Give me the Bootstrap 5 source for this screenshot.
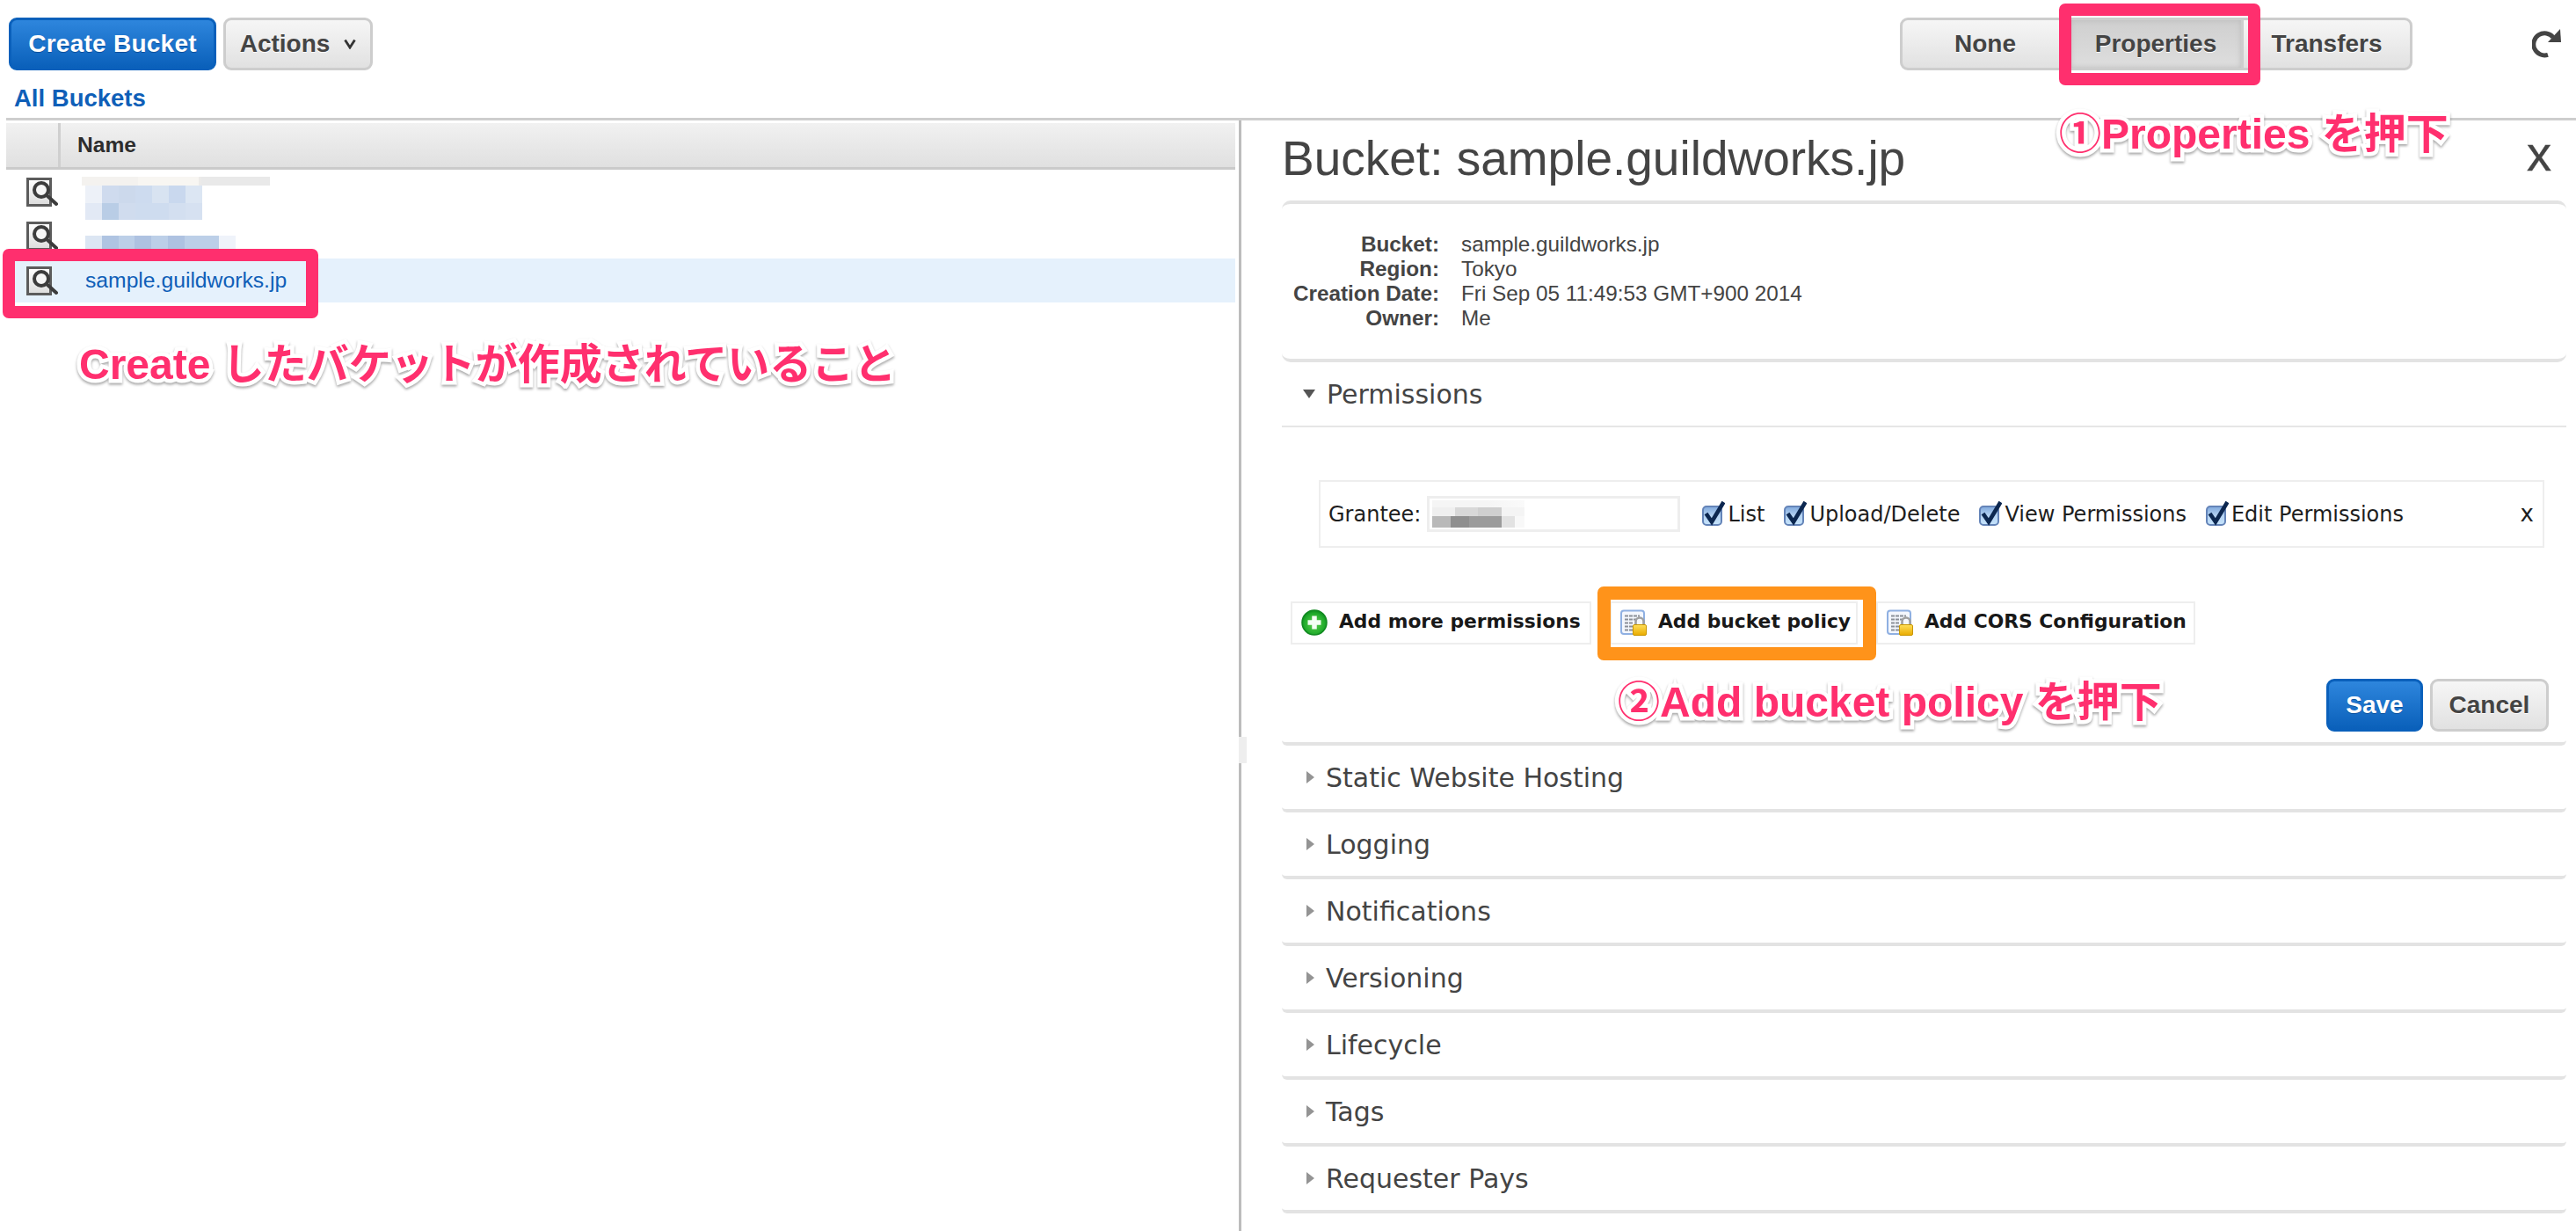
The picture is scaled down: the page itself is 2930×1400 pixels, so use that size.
<!DOCTYPE html>
<html lang="en">
<head>
<meta charset="utf-8">
<title>S3 Buckets</title>
<link rel="stylesheet" href="https://cdn.jsdelivr.net/npm/bootstrap@5.3.0/dist/css/bootstrap.min.css">
<style>
html,body{height:100%;}
body{font-family:"Liberation Sans",Arial,sans-serif;color:#444;background:#fff;overflow:hidden;position:relative;width:2930px;height:1400px;}
.s3-btn{font-family:"Liberation Sans",Arial,sans-serif;font-weight:700;font-size:28px;line-height:1;height:60px;border-width:3px;border-style:solid;border-radius:9px;padding:0;display:inline-flex;align-items:center;justify-content:center;}
.s3-grey,.s3-grey:hover{background:linear-gradient(#f6f6f6,#e1e1e1);border-color:#cdcdcd;color:#444;text-shadow:0 1px 0 #fff;}
.s3-blue,.s3-blue:hover{background:linear-gradient(#2e86dd,#0a60ba);border-color:#0a60bb;color:#fff;text-shadow:0 1px 0 #0a4f9c;}
.s3-create{width:236px;letter-spacing:.25px;}
.s3-actions{width:170px;gap:16px;}
.s3-group .s3-btn{border-radius:0;margin-left:-3px!important;flex:none;}
.s3-none{width:194px;border-radius:9px 0 0 9px!important;margin-left:0!important;}
.s3-props{width:200px;background:linear-gradient(#cfcfcf,#dedede)!important;box-shadow:inset 0 0 6px #bbb;}
.s3-trans{width:195px;border-radius:0 9px 9px 0!important;}
.s3-groupwrap{margin-right:136px;}
.s3-top{height:137px;margin-left:7px;border-bottom:3px solid #cecece;}
.s3-bar{padding:20px 0 0 3px;}
.s3-refresh{width:33px;height:33px;margin:13px 17px 0 0;}
.s3-crumb{font-size:27.5px;font-weight:700;color:#0f5fb8;text-decoration:none;line-height:30px;margin:17px 0 0 9px;display:block;}
.s3-main{height:1263px;}
.s3-left{width:1398px;margin-left:7px;padding-top:3px;}
.s3-head{height:53px;background:linear-gradient(#f1f1f1,#e0e0e0);border-bottom:3px solid #cacaca;color:#2d2d2d;font-weight:700;font-size:24.6px;}
.s3-head-a{width:62px;border-right:3px solid #cfcfcf;}
.s3-head-b{padding-left:19px;line-height:50px;}
.s3-row{height:50.4px;}
.s3-row-on{background:#e5f1fc;}
.s3-ico{width:36px;height:34px;margin:9px 0 0 23px;flex:none;}
.s3-name{margin-left:31px;font-size:24.7px;color:#0f5fb8;text-decoration:none;line-height:50px;}
.s3-cell{margin-left:27px;}
.s3-beige{width:214px;height:10px;margin:8px 0 0 0;background:linear-gradient(90deg,#f4f2ef 30%,#f8f6f2 30% 62%,#eeece9 62%,#e9e9e9 64%);}
.s3-p1,.s3-p2{width:133px;height:19.5px;margin-left:4px;}
.s3-p1{background:linear-gradient(90deg,#edf1f8 14.3%,#cfdbee 14.3% 28.6%,#ccd9ec 28.6% 42.9%,#cddbef 42.9% 57.2%,#d8e3f1 57.2% 71.5%,#c9d8ee 71.5% 85.8%,#dce6f3 85.8%);}
.s3-p2{background:linear-gradient(90deg,#e2e9f5 14.3%,#b9cde6 14.3% 28.6%,#d0dcee 28.6% 42.9%,#cedcef 42.9% 71.5%,#d3dff0 71.5% 85.8%,#d6e1f1 85.8%);}
.s3-p3{width:171px;height:17px;margin:25px 0 0 4px;background:linear-gradient(90deg,#dce6f3 11%,#afc4e2 11% 22%,#bccfe8 22% 33%,#aec2e1 33% 44%,#bccfe8 44% 55%,#aec2e1 55% 66%,#bccfe8 66% 89%,#eff3fa 89%);}
.s3-split{width:3px;margin-left:4px;background:#bcbcbc;position:relative;}
.s3-grip{position:absolute;left:0;top:701px;width:9px;height:30px;background:#eee;}
.s3-right{width:1461px;margin-left:46px;}
.s3-title{font-size:55px;line-height:62px;font-weight:400;color:#444;height:91px;padding:12px 0 0 0;margin:0;}
.s3-close{position:absolute;left:2874px;top:145px;font-size:56px;line-height:60px;color:#444;text-decoration:none;-webkit-text-stroke:.4px #444;}
.s3-info{height:184px;border-top:4px solid #e3e3e3;border-bottom:4px solid #e3e3e3;border-radius:10px;padding-top:32px;font-size:24.3px;line-height:28px;}
.s3-k{width:179px;text-align:right;font-weight:700;flex:none;}
.s3-v{margin-left:25px;}
.s3-sec{font-family:"DejaVu Sans",Verdana,sans-serif;font-size:30px;color:#444;height:76px;border-bottom:4px solid #e3e3e3;border-radius:0 0 6px 6px;padding-left:28px;gap:13px;}
.s3-sec svg{width:9px;height:14px;flex:none;}
.s3-perm{height:74px;border-bottom:2px solid #e6e6e6;padding-left:24px;gap:13px;font-family:"DejaVu Sans",Verdana,sans-serif;font-size:30px;color:#444;}
.s3-perm svg{width:14px;height:10px;flex:none;}
.s3-body{height:362px;border-bottom:4px solid #e3e3e3;border-radius:0 0 6px 6px;padding-top:60px;font-family:"DejaVu Sans",Verdana,sans-serif;color:#1e1e1e;}
.s3-grant{margin-left:42px;width:1394px;height:77px;border:2px solid #eee;font-size:24px;padding-left:9px;}
.s3-input{width:288px;height:41px;border:3px solid #eee;margin-left:7px;margin-right:25px;padding:2px 0 0 3px;flex:none;}
.s3-b1,.s3-b2,.s3-b3{width:105px;}
.s3-b1{height:8px;background:linear-gradient(90deg,#f5f5f5 60%,#fafafa);}
.s3-b2{height:10px;background:linear-gradient(90deg,#efefef 25%,#d8d8d8 25% 50%,#cfcfcf 50% 75%,#f4f4f4 75%);}
.s3-b3{height:13px;background:linear-gradient(90deg,#b9b9b9 20%,#8f8f8f 20% 40%,#9b9b9b 40% 75%,#e2e2e2 75% 90%,#f8f8f8 90%);}
.s3-chk{width:26px;height:30px;flex:none;margin:0 3px 4px 0;}
.s3-lab{margin-right:22px;}
.s3-x{margin-left:auto;margin-right:10px;font-size:26px;}
.s3-adds{margin:61px 0 0 10px;height:49px;font-size:21.800px;font-weight:700;color:#181818;}
.s3-add{height:49px;border:2px solid #eee;padding:0 0 2px 10px;gap:13px;white-space:nowrap;}
.s3-add svg{width:30px;height:30px;flex:none;}
.s3-a1{width:342px;}.s3-a2{width:282px;margin-left:21px;}.s3-a3{width:363px;margin-left:21px;}
.s3-actions2{margin:39px 0 0 0;padding-right:20px;gap:8px;}
.s3-save{width:110px;}.s3-cancel{width:135px;}
.s3-box{position:absolute;box-sizing:border-box;border:14px solid #ff2f6e;border-radius:7px;pointer-events:none;}
.s3-box1{left:2342px;top:4px;width:229px;height:93px;}
.s3-box2{left:3px;top:283px;width:359px;height:79px;}
.s3-box3{left:1817px;top:667px;width:317px;height:84px;border-color:#ff931a;border-width:15px;}
.s3-note{position:absolute;white-space:nowrap;font-family:"Liberation Sans","Noto Sans CJK JP",sans-serif;font-weight:700;font-size:48px;line-height:56px;color:#ff2f6e;-webkit-text-stroke:9px #fff;paint-order:stroke fill;filter:drop-shadow(0 2px 1.5px rgba(0,0,0,.35));}
.s3-n1{left:2342px;top:125px;}
.s3-n2{left:90px;top:387px;}
.s3-n3{left:1840px;top:771px;}
</style>
</head>
<body>
<svg width="0" height="0" class="position-absolute">
<defs>
<linearGradient id="gPaper" x1="0" y1="0" x2="0" y2="1"><stop offset="0" stop-color="#fff"/><stop offset="1" stop-color="#dcdcdc"/></linearGradient>
<radialGradient id="gGreen" cx=".5" cy=".55" r=".55"><stop offset="0" stop-color="#5fd24f"/><stop offset=".75" stop-color="#22ac2c"/><stop offset="1" stop-color="#0c8c1c"/></radialGradient>
<linearGradient id="gGold" x1="0" y1="0" x2="0" y2="1"><stop offset="0" stop-color="#ffdf5a"/><stop offset="1" stop-color="#e9ab00"/></linearGradient>
<linearGradient id="gAqua" x1="0" y1="0" x2="0" y2="1"><stop offset="0" stop-color="#7fa8dc"/><stop offset=".5" stop-color="#b4d2f2"/><stop offset="1" stop-color="#c6e4fc"/></linearGradient>
<symbol id="icoLens" viewBox="0 0 36 34">
<rect x="1.500" y="1.500" width="26" height="30" fill="url(#gPaper)" stroke="#5c5c5c" stroke-width="3"/>
<circle cx="17" cy="14" r="8" fill="#f6f6f6" stroke="#3c3c3c" stroke-width="4"/>
<path d="M23 20L34 30" stroke="#3c3c3c" stroke-width="4" stroke-linecap="round"/>
</symbol>
<symbol id="icoPolicy" viewBox="0 0 30 30">
<rect x="1" y="1.500" width="26" height="26.500" rx="3" fill="#f4f7fd" stroke="#8fb0e2" stroke-width="2"/>
<path d="M5 7.500h17M5 11.500h14M5 15.500h9M5 19.500h9M5 23.500h9" stroke="#8a8f98" stroke-width="1.800" stroke-dasharray="4 1"/>
<path d="M17.500 19v-5a4.500 4.500 0 0 1 9 0v5" fill="none" stroke="#a0a0a0" stroke-width="2.600"/>
<rect x="14.500" y="17.500" width="15" height="12" rx="1.500" fill="url(#gGold)" stroke="#c99600"/>
</symbol>
<symbol id="icoPlus" viewBox="0 0 30 30">
<circle cx="15" cy="15" r="14" fill="url(#gGreen)" stroke="#118a20" stroke-width="1.500"/>
<path d="M15 7.500v15M7.500 15h15" stroke="#f4fff4" stroke-width="5.500"/>
</symbol>
<symbol id="icoChk" viewBox="0 0 26 30">
<rect x="1" y="8" width="21" height="21" rx="4" fill="url(#gAqua)" stroke="#6484b8" stroke-width="2"/>
<path d="M4.500 16L11 25.500L24.500 3" fill="none" stroke="#0c2750" stroke-width="4.600"/>
</symbol>
<symbol id="triR" viewBox="0 0 9 14"><path d="M0 0L9 7L0 14Z" fill="#949494"/></symbol>
<symbol id="triD" viewBox="0 0 14 10"><path d="M0 0H14L7 10Z" fill="#555"/></symbol>
</defs>
</svg>

<header class="s3-top">
  <div class="s3-bar d-flex justify-content-between align-items-start">
    <div class="d-flex gap-2">
      <button type="button" class="btn s3-btn s3-blue s3-create">Create Bucket</button>
      <button type="button" class="btn s3-btn s3-grey s3-actions">Actions
        <svg width="14" height="12" viewBox="0 0 14 12"><path d="M1.500 1.500L7 10L12.500 1.500" fill="none" stroke="#333" stroke-width="2.800"/></svg>
      </button>
    </div>
    <div class="d-flex">
      <div class="btn-group s3-group s3-groupwrap" role="group">
        <button type="button" class="btn s3-btn s3-grey s3-none">None</button>
        <button type="button" class="btn s3-btn s3-grey s3-props">Properties</button>
        <button type="button" class="btn s3-btn s3-grey s3-trans">Transfers</button>
      </div>
      <svg class="s3-refresh" viewBox="0 0 33 33"><path d="M24 9.500A12.500 12.500 0 1 0 18 29.300" fill="none" stroke="#444" stroke-width="5"/><path d="M18 15H33L32 0Z" fill="#444"/></svg>
    </div>
  </div>
  <a class="s3-crumb" href="#">All Buckets</a>
</header>

<main class="s3-main d-flex">
  <section class="s3-left">
    <div class="s3-head d-flex"><div class="s3-head-a"></div><div class="s3-head-b">Name</div></div>
    <div class="s3-row d-flex">
      <svg class="s3-ico"><use href="#icoLens"/></svg>
      <div class="s3-cell"><div class="s3-beige"></div><div class="s3-p1"></div><div class="s3-p2"></div></div>
    </div>
    <div class="s3-row d-flex">
      <svg class="s3-ico"><use href="#icoLens"/></svg>
      <div class="s3-cell"><div class="s3-p3"></div></div>
    </div>
    <div class="s3-row s3-row-on d-flex">
      <svg class="s3-ico"><use href="#icoLens"/></svg>
      <a class="s3-name" href="#">sample.guildworks.jp</a>
    </div>
  </section>

  <div class="s3-split"><div class="s3-grip"></div></div>

  <section class="s3-right">
    <h1 class="s3-title">Bucket: sample.guildworks.jp</h1>
    <a class="s3-close" href="#">x</a>
    <div class="s3-info">
      <div class="d-flex"><div class="s3-k">Bucket:</div><div class="s3-v">sample.guildworks.jp</div></div>
      <div class="d-flex"><div class="s3-k">Region:</div><div class="s3-v">Tokyo</div></div>
      <div class="d-flex"><div class="s3-k">Creation Date:</div><div class="s3-v">Fri Sep 05 11:49:53 GMT+900 2014</div></div>
      <div class="d-flex"><div class="s3-k">Owner:</div><div class="s3-v">Me</div></div>
    </div>
    <div class="s3-perm d-flex align-items-center"><svg><use href="#triD"/></svg>Permissions</div>
    <div class="s3-body">
      <div class="s3-grant d-flex align-items-center">
        <span>Grantee:</span>
        <div class="s3-input"><div class="s3-b1"></div><div class="s3-b2"></div><div class="s3-b3"></div></div>
        <svg class="s3-chk"><use href="#icoChk"/></svg><span class="s3-lab">List</span>
        <svg class="s3-chk"><use href="#icoChk"/></svg><span class="s3-lab">Upload/Delete</span>
        <svg class="s3-chk"><use href="#icoChk"/></svg><span class="s3-lab">View Permissions</span>
        <svg class="s3-chk"><use href="#icoChk"/></svg><span class="s3-lab">Edit Permissions</span>
        <span class="s3-x">x</span>
      </div>
      <div class="s3-adds d-flex">
        <div class="s3-add s3-a1 d-flex align-items-center"><svg><use href="#icoPlus"/></svg>Add more permissions</div>
        <div class="s3-add s3-a2 d-flex align-items-center"><svg><use href="#icoPolicy"/></svg>Add bucket policy</div>
        <div class="s3-add s3-a3 d-flex align-items-center"><svg><use href="#icoPolicy"/></svg>Add CORS Configuration</div>
      </div>
      <div class="s3-actions2 d-flex justify-content-end">
        <button type="button" class="btn s3-btn s3-blue s3-save">Save</button>
        <button type="button" class="btn s3-btn s3-grey s3-cancel">Cancel</button>
      </div>
    </div>
    <div class="s3-sec d-flex align-items-center"><svg><use href="#triR"/></svg>Static Website Hosting</div>
    <div class="s3-sec d-flex align-items-center"><svg><use href="#triR"/></svg>Logging</div>
    <div class="s3-sec d-flex align-items-center"><svg><use href="#triR"/></svg>Notifications</div>
    <div class="s3-sec d-flex align-items-center"><svg><use href="#triR"/></svg>Versioning</div>
    <div class="s3-sec d-flex align-items-center"><svg><use href="#triR"/></svg>Lifecycle</div>
    <div class="s3-sec d-flex align-items-center"><svg><use href="#triR"/></svg>Tags</div>
    <div class="s3-sec d-flex align-items-center"><svg><use href="#triR"/></svg>Requester Pays</div>
  </section>
</main>

<div class="s3-box s3-box1"></div>
<div class="s3-box s3-box2"></div>
<div class="s3-box s3-box3"></div>
<div class="s3-note s3-n1">①Properties を押下</div>
<div class="s3-note s3-n2">Create したバケットが作成されていること</div>
<div class="s3-note s3-n3">②Add bucket policy を押下</div>

<script src="https://cdn.jsdelivr.net/npm/bootstrap@5.3.0/dist/js/bootstrap.bundle.min.js"></script>
</body>
</html>
